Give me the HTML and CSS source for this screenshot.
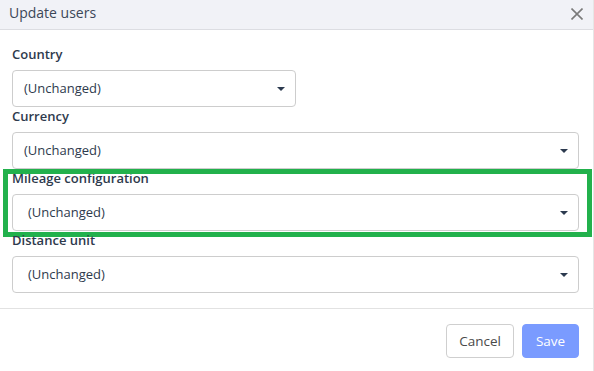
FILE: index.html
```html
<!DOCTYPE html>
<html lang="en">
<head>
    <meta charset="UTF-8">
    <meta name="viewport" content="width=device-width, initial-scale=1.0">
    <title>Update users</title>
    <link rel="stylesheet" href="styles.css">
</head>
<body>
    <div class="dialog">
        <div class="dialog-header">
            <span class="dialog-title">Update users</span>
            <button class="close-btn" aria-label="Close">
                <svg width="12" height="12" viewBox="0 0 12 12">
                    <path d="M0.5 0.5 L11.5 11.5 M11.5 0.5 L0.5 11.5" stroke="#7a7a7a" stroke-width="1.6" fill="none"/>
                </svg>
            </button>
        </div>
        <div class="dialog-body">
            <div class="form-group">
                <label>Country</label>
                <div class="select select-short">
                    <span>(Unchanged)</span>
                    <i class="caret"></i>
                </div>
            </div>
            <div class="form-group">
                <label>Currency</label>
                <div class="select">
                    <span>(Unchanged)</span>
                    <i class="caret"></i>
                </div>
            </div>
            <div class="form-group highlighted">
                <label>Mileage configuration</label>
                <div class="select select-indent">
                    <span>(Unchanged)</span>
                    <i class="caret"></i>
                </div>
            </div>
            <div class="form-group">
                <label>Distance unit</label>
                <div class="select select-indent">
                    <span>(Unchanged)</span>
                    <i class="caret"></i>
                </div>
            </div>
        </div>
        <div class="dialog-footer">
            <button class="btn btn-cancel">Cancel</button>
            <button class="btn btn-save">Save</button>
        </div>
    </div>
</body>
</html>
```

FILE: styles.css
```css
body {
    margin: 0;
    background: white;
    font-family: "Open Sans", "Liberation Sans", Arial, sans-serif;
}
.dialog {
    width: 593px;
    height: 371px;
    background: white;
    border-right: 1px solid #e6e6e6;
}
.dialog-header {
    height: 29px;
    background: #f1f2f7;
    border-bottom: 1px solid #dcdde2;
    display: flex;
    align-items: center;
    justify-content: space-between;
    padding: 0 10px 0 9px;
}
.dialog-title {
    font-size: 14px;
    color: #3c4758;
    margin-top: -4px;
}
.close-btn {
    border: none;
    background: none;
    padding: 0;
    width: 12px;
    height: 12px;
    display: flex;
    margin-top: -1px;
}
.dialog-body {
    padding: 15px 14px 15px 12px;
    border-bottom: 1px solid #e2e2e2;
}
.form-group {
    position: relative;
}
.form-group label {
    display: block;
    height: 20px;
    line-height: 19px;
    margin-bottom: 5px;
    font-size: 13px;
    font-weight: 600;
    color: #2e3a4d;
}
.highlighted::after {
    content: "";
    position: absolute;
    top: 0;
    left: -9px;
    right: -13px;
    bottom: -6px;
    border: 5px solid #22b14c;
}
.select {
    height: 35px;
    border: 1px solid #cdcdcd;
    border-radius: 4px;
    display: flex;
    align-items: center;
    justify-content: space-between;
    padding: 0 10px 0 11px;
    font-size: 13px;
    color: #2e3a4d;
}
.select span {
    margin-top: -2px;
}
.select-short {
    width: 261px;
}
.select-indent {
    padding-left: 15px;
}
.caret {
    width: 0;
    height: 0;
    border-left: 4px solid transparent;
    border-right: 4px solid transparent;
    border-top: 4px solid #2c3a4f;
}
.dialog-footer {
    display: flex;
    justify-content: flex-end;
    gap: 8px;
    padding: 15px 14px 0 0;
}
.btn {
    height: 34px;
    border-radius: 4px;
    font-family: inherit;
    font-size: 13.5px;
    cursor: pointer;
}
.btn-cancel {
    width: 68px;
    background: white;
    border: 1px solid #cfcfcf;
    color: #4a4a4a;
}
.btn-save {
    width: 57px;
    background: #7a9bff;
    border: 1px solid #7a9bff;
    color: white;
}
```
